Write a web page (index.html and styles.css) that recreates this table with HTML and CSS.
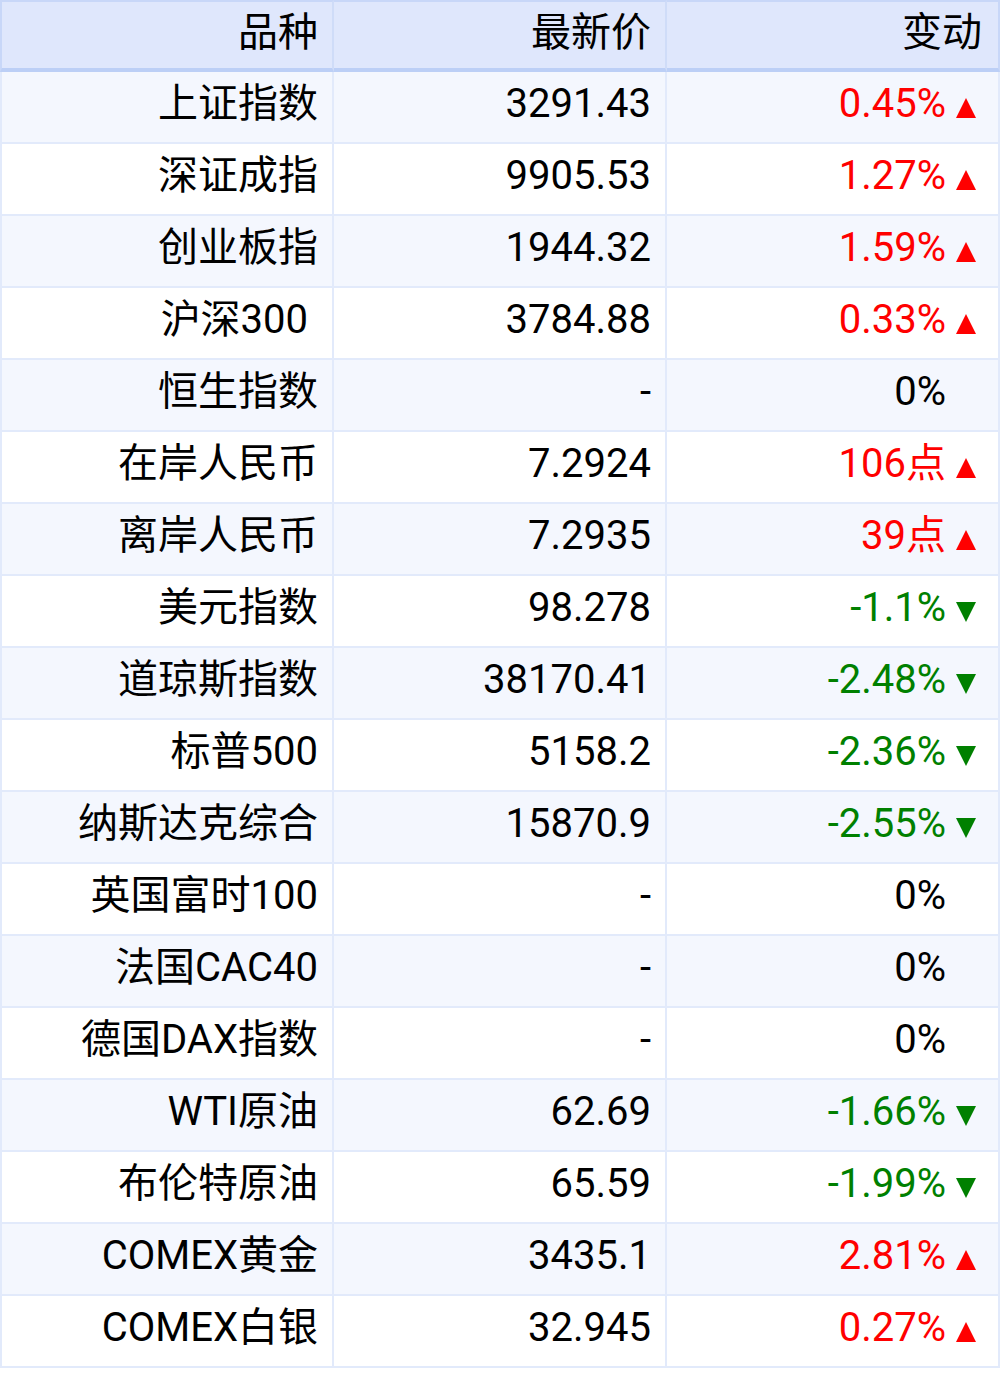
FILE: index.html
```html
<!DOCTYPE html>
<html lang="zh">
<head>
<meta charset="utf-8">
<title>行情</title>
<link rel="stylesheet" href="styles.css">
</head>
<body>
<table class="quotes">
  <thead>
    <tr><th class="c1">品种</th><th class="c2">最新价</th><th class="c3">变动</th></tr>
  </thead>
  <tbody>
    <tr><td class="c1">上证指数</td><td class="c2">3291.43</td><td class="c3 up">0.45%<svg class="tri" viewBox="0 0 20 20"><path d="M10 0L20 20H0Z"/></svg></td></tr>
    <tr><td class="c1">深证成指</td><td class="c2">9905.53</td><td class="c3 up">1.27%<svg class="tri" viewBox="0 0 20 20"><path d="M10 0L20 20H0Z"/></svg></td></tr>
    <tr><td class="c1">创业板指</td><td class="c2">1944.32</td><td class="c3 up">1.59%<svg class="tri" viewBox="0 0 20 20"><path d="M10 0L20 20H0Z"/></svg></td></tr>
    <tr><td class="c1">沪深300&nbsp;</td><td class="c2">3784.88</td><td class="c3 up">0.33%<svg class="tri" viewBox="0 0 20 20"><path d="M10 0L20 20H0Z"/></svg></td></tr>
    <tr><td class="c1">恒生指数</td><td class="c2">-</td><td class="c3">0%<span class="tri-space"></span></td></tr>
    <tr><td class="c1">在岸人民币</td><td class="c2">7.2924</td><td class="c3 up">106点<svg class="tri" viewBox="0 0 20 20"><path d="M10 0L20 20H0Z"/></svg></td></tr>
    <tr><td class="c1">离岸人民币</td><td class="c2">7.2935</td><td class="c3 up">39点<svg class="tri" viewBox="0 0 20 20"><path d="M10 0L20 20H0Z"/></svg></td></tr>
    <tr><td class="c1">美元指数</td><td class="c2">98.278</td><td class="c3 down">-1.1%<svg class="tri" viewBox="0 0 20 20"><path d="M0 0H20L10 20Z"/></svg></td></tr>
    <tr><td class="c1">道琼斯指数</td><td class="c2">38170.41</td><td class="c3 down">-2.48%<svg class="tri" viewBox="0 0 20 20"><path d="M0 0H20L10 20Z"/></svg></td></tr>
    <tr><td class="c1">标普500</td><td class="c2">5158.2</td><td class="c3 down">-2.36%<svg class="tri" viewBox="0 0 20 20"><path d="M0 0H20L10 20Z"/></svg></td></tr>
    <tr><td class="c1">纳斯达克综合</td><td class="c2">15870.9</td><td class="c3 down">-2.55%<svg class="tri" viewBox="0 0 20 20"><path d="M0 0H20L10 20Z"/></svg></td></tr>
    <tr><td class="c1">英国富时100</td><td class="c2">-</td><td class="c3">0%<span class="tri-space"></span></td></tr>
    <tr><td class="c1">法国CAC40</td><td class="c2">-</td><td class="c3">0%<span class="tri-space"></span></td></tr>
    <tr><td class="c1">德国DAX指数</td><td class="c2">-</td><td class="c3">0%<span class="tri-space"></span></td></tr>
    <tr><td class="c1">WTI原油</td><td class="c2">62.69</td><td class="c3 down">-1.66%<svg class="tri" viewBox="0 0 20 20"><path d="M0 0H20L10 20Z"/></svg></td></tr>
    <tr><td class="c1">布伦特原油</td><td class="c2">65.59</td><td class="c3 down">-1.99%<svg class="tri" viewBox="0 0 20 20"><path d="M0 0H20L10 20Z"/></svg></td></tr>
    <tr><td class="c1">COMEX黄金</td><td class="c2">3435.1</td><td class="c3 up">2.81%<svg class="tri" viewBox="0 0 20 20"><path d="M10 0L20 20H0Z"/></svg></td></tr>
    <tr><td class="c1">COMEX白银</td><td class="c2">32.945</td><td class="c3 up">0.27%<svg class="tri" viewBox="0 0 20 20"><path d="M10 0L20 20H0Z"/></svg></td></tr>
  </tbody>
</table>
</body>
</html>
```
FILE: styles.css
```css
html, body {
  margin: 0;
  padding: 0;
  background: #ffffff;
}

.quotes {
  width: 1000px;
  table-layout: fixed;
  border-collapse: separate;
  border-spacing: 0;
  font-family: Roboto, "Noto Sans CJK SC", sans-serif;
  font-size: 40px;
  color: #000000;
}

.quotes th,
.quotes td {
  box-sizing: border-box;
  text-align: right;
  font-weight: normal;
  white-space: nowrap;
  padding: 0 14px 7px 0;
  line-height: 63px;
  height: 72px;
  border-right: 2px solid #e2eafb;
  border-bottom: 2px solid #e2eafb;
}

.quotes .c1 { width: 334px; border-left: 2px solid #e2eafb; }
.quotes .c2 { width: 333px; }
.quotes .c3 { width: 333px; padding-right: 22px; }

.quotes thead th {
  background: #dfe7fc;
  height: 72px;
  padding-bottom: 5px;
  line-height: 61px;
  border-top: 2px solid #c8d7f8;
  border-right-color: #cfdcf8;
  border-bottom: 4px solid #bccff6;
}

.quotes thead th.c3 { padding-right: 16px; border-right-color: #c8d7f8; }
.quotes thead th.c1 { border-left-color: #c8d7f8; }

.quotes tbody tr:nth-child(odd) td { background: #f4f7fe; }
.quotes tbody tr:nth-child(even) td { background: #ffffff; }

.up { color: #ff0000; }
.down { color: #008000; }

.tri {
  display: inline-block;
  width: 20px;
  height: 20px;
  margin-left: 10px;
  vertical-align: -1px;
  fill: currentColor;
}

.tri-space {
  display: inline-block;
  width: 30px;
}
```
